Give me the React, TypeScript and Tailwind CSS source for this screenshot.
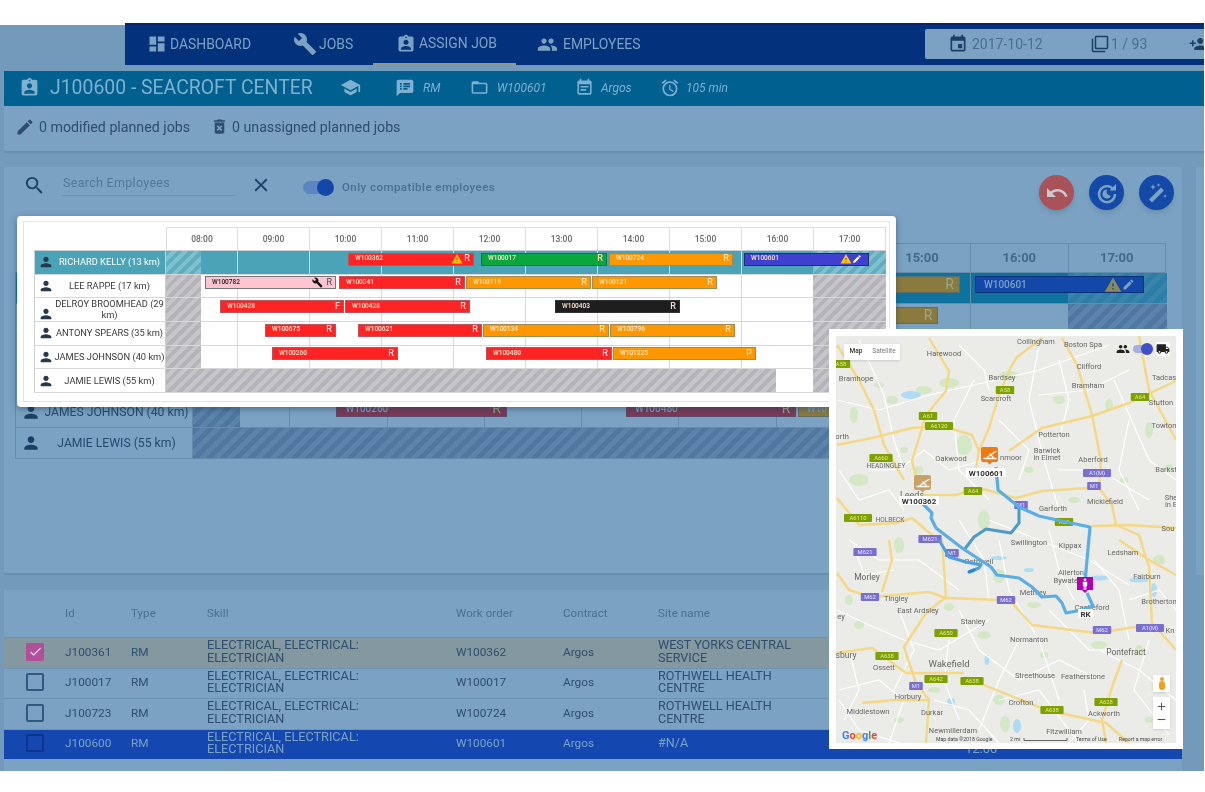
import React from "react";
import {
  MdDashboard, MdBuild, MdAssignmentInd, MdPeople, MdEvent, MdFilterNone, MdPersonAdd, MdSchool,
  MdSpeakerNotes, MdFolderOpen, MdEventNote, MdAccessAlarm, MdEdit, MdDeleteForever, MdSearch, MdClose,
  MdUndo, MdPerson, MdWarning, MdCheck, MdLocalShipping, MdAdd, MdRemove,
} from "react-icons/md";

type Bar = { id: string; l: number; r: number; c: "red" | "orange" | "green" | "blue" | "pink" | "black"; end: string; warn?: boolean; edit?: boolean; tool?: boolean };
type Row = { name: string; bars: Bar[]; hatch: [number, number][] };

const stdHatch: [number, number][] = [[0, 35], [647, 720]];
const rows: Row[] = [
  { name: "RICHARD KELLY (13 km)", hatch: stdHatch, bars: [
    { id: "W100362", l: 182, r: 308, c: "red", end: "R", warn: true },
    { id: "W100017", l: 315, r: 441, c: "green", end: "R" },
    { id: "W100724", l: 443, r: 567, c: "orange", end: "R" },
    { id: "W100601", l: 578, r: 703, c: "blue", end: "", warn: true, edit: true },
  ] },
  { name: "LEE RAPPE (17 km)", hatch: stdHatch, bars: [
    { id: "W100782", l: 39, r: 170, c: "pink", end: "R", tool: true },
    { id: "W100341", l: 173, r: 299, c: "red", end: "R" },
    { id: "W100119", l: 300, r: 425, c: "orange", end: "R" },
    { id: "W100121", l: 426, r: 551, c: "orange", end: "R" },
  ] },
  { name: "DELROY BROOMHEAD (29\nkm)", hatch: stdHatch, bars: [
    { id: "W100428", l: 54, r: 178, c: "red", end: "F" },
    { id: "W100428", l: 179, r: 304, c: "red", end: "R" },
    { id: "W100403", l: 389, r: 514, c: "black", end: "R" },
  ] },
  { name: "ANTONY SPEARS (35 km)", hatch: stdHatch, bars: [
    { id: "W100675", l: 99, r: 170, c: "red", end: "R" },
    { id: "W100621", l: 192, r: 316, c: "red", end: "R" },
    { id: "W100134", l: 317, r: 443, c: "orange", end: "R" },
    { id: "W100796", l: 444, r: 569, c: "orange", end: "R" },
  ] },
  { name: "JAMES JOHNSON (40 km)", hatch: stdHatch, bars: [
    { id: "W100260", l: 106, r: 232, c: "red", end: "R" },
    { id: "W100480", l: 320, r: 446, c: "red", end: "R" },
    { id: "W101225", l: 447, r: 590, c: "orange", end: "P" },
  ] },
  { name: "JAMIE LEWIS (55 km)", hatch: [[0, 610], [647, 720]], bars: [] },
];
const hours = ["08:00", "09:00", "10:00", "11:00", "12:00", "13:00", "14:00", "15:00", "16:00", "17:00"];

const frontBar = {
  red: "bg-[#ff2323] border-[#b9555d]",
  orange: "bg-[#ff9800] border-[#a38a55]",
  green: "bg-[#0aa63e] border-[#1b6d62]",
  blue: "bg-[#3f3fd0] border-[#22305f]",
  pink: "bg-[#ffc4d0] border-[#77777f]",
  black: "bg-[#1e1e1e] border-[#333333]",
};
const backBar = {
  red: "bg-[#7a3a55] border-[#5c4a70]",
  orange: "bg-[#8b7a3e] border-[#5f6f68]",
  green: "bg-[#3a7a6a] border-[#2a5f70]",
  blue: "bg-[#1448a8] border-[#0b2f78]",
  pink: "bg-[#a38aa8] border-[#4f6a85]",
  black: "bg-[#2a3f55] border-[#223a55]",
};

function Schedule({ front }: { front: boolean }) {
  const scale = front ? 1 : 97.4 / 72;
  const barClass = front ? frontBar : backBar;
  const colW = 72 * scale;
  return (
    <div className={front ? "w-[852px]" : "w-[1151px]"}>
      <div className={`flex ${front ? "h-[23px] pl-[132px]" : "h-[29px] pl-[177px]"}`}>
        {hours.map((h) => (
          <div key={h} style={{ width: colW }} className={`flex items-center justify-center border-t border-r first:border-l ${front ? "border-[#dddddd] text-[8.5px] font-medium text-[#666666]" : "border-[#668cab] text-[13px] font-bold text-[#44698a]"}`}>{h}</div>
        ))}
      </div>
      <div className={`border-t border-l ${front ? "border-[#c9cfd2]" : "border-[#668cab]"}`}>
        {rows.map((row, i) => (
          <div key={row.name} className={`flex border-b ${front ? "h-[23.7px] border-[#d8d8d8]" : "h-[31px] border-[#668cab]"} ${i === 0 ? (front ? "bg-[#4ba3b8]" : "bg-[#0e729e]") : ""}`}>
            <div className={`flex shrink-0 items-center border-r ${front ? "w-[131px] border-[#c9cfd2] pl-[3px]" : "w-[177px] border-[#668cab] pl-[5px]"}`}>
              <MdPerson className={`shrink-0 ${front ? `text-[16px] text-[#26384a] ${i === 2 ? "mt-[8px]" : ""}` : "text-[20px] text-[#1d3f66]"}`} />
              <span className={`min-w-0 flex-1 overflow-hidden text-center ${front ? `whitespace-pre text-[9.3px] leading-[10.5px] ${i === 0 ? "text-white" : "text-[#3a3a3a]"}` : "text-[12.2px] whitespace-nowrap text-[#26496f]"}`}>{front ? row.name : row.name.replace("\n", " ")}</span>
            </div>
            <div className="relative flex-1">
              <div className="absolute inset-0 flex">
                {hours.map((h) => (
                  <div key={h} style={{ width: colW }} className={`border-r ${front ? "border-[#d8d8d8]" : "border-[#668cab]"}`} />
                ))}
              </div>
              {row.hatch.map(([a, b]) => (
                <div key={a} style={{ left: a * scale, width: (b - a) * scale }} className={`absolute inset-y-0 ${front
                  ? i === 0
                    ? "bg-[repeating-linear-gradient(135deg,#5eaec0_0,#5eaec0_4px,#80bfcd_4px,#80bfcd_8px)]"
                    : "bg-[repeating-linear-gradient(135deg,#b4b4ba_0,#b4b4ba_4px,#c6c6ca_4px,#c6c6ca_8px)]"
                  : i === 0
                    ? "bg-[repeating-linear-gradient(135deg,#2a7ea8_0,#2a7ea8_5px,#3a84ab_5px,#3a84ab_10px)]"
                    : "bg-[repeating-linear-gradient(135deg,#4f78a0_0,#4f78a0_5px,#5d83aa_5px,#5d83aa_10px)]"}`} />
              ))}
              {row.bars.map((b) => (
                <div key={b.id + b.l} style={{ left: b.l * scale, width: (b.r - b.l) * scale }} className={`absolute flex items-center border ${barClass[b.c]} ${front ? "top-[1.5px] h-[13px] px-[6px] text-[6.5px] font-medium" : "top-[3px] h-[17px] px-[8px] text-[10px] font-medium"} ${b.c === "pink" ? "font-bold text-[#222222]" : front ? "text-[#ffe9d0]" : "text-[#7ba2c2]"}`}>
                  <span className="flex-1">{b.id}</span>
                  {b.tool && <MdBuild className="mr-[2px] text-[11px] text-[#111111]" />}
                  {b.warn && <MdWarning className={front ? "text-[12px] text-[#ffc107]" : "text-[18px] text-[#8a8a52]"} />}
                  {b.edit && <MdEdit className={front ? "text-[10px] text-white" : "text-[13px] text-[#7ba2c2]"} />}
                  {b.end && <span className={`-mr-[3px] ${!front ? "text-[14px] font-normal text-[#9aa88a]" : `ml-[1px] text-[9px] ${b.c === "pink" ? "font-normal text-[#444444]" : b.c === "red" || b.c === "black" ? "text-[#ffd6d6]" : "text-[#ffe2a8]"}`}`}>{b.end}</span>}
                </div>
              ))}
            </div>
          </div>
        ))}
      </div>
    </div>
  );
}

const yellow = [
  "M1063 338L1078 365L1093 415L1102 461L1100 488L1113 505L1117 525L1140 535L1150 567L1153 623L1177 650",
  "M1010 451L1043 428L1093 416L1130 403L1177 381",
  "M1043 338L1017 358L1010 371L1000 395L990 428L980 451L977 468",
  "M930 338L950 371L947 391L927 415L920 438L913 461L920 488",
  "M838 445L873 438L913 428L943 426L973 435L980 451",
  "M838 345L860 380L875 410L885 445L905 480",
  "M925 495L957 495L980 488L1017 498L1043 491L1090 488",
  "M913 518L933 535L943 540L947 597L927 613L905 647L917 683L930 700L927 743",
  "M838 573L850 590L873 597L930 592L947 598L1000 600L1013 603L1033 625L1097 633L1150 625",
  "M890 540L893 560L883 592",
  "M965 677L1047 710L1107 723L1130 743",
  "M838 653L873 648L907 673L965 673",
  "M1123 660L1113 687L1103 720L1107 743",
  "M838 498L860 525L897 523L913 518",
  "M1177 528L1130 525L1093 526",
  "M863 703L897 700L930 700",
  "M1140 336L1150 390L1177 440",
  "M1120 540L1150 560L1177 575",
];
const white = [
  "M838 400L880 410L930 395L975 385L1040 370L1110 345", "M860 340L885 395L895 440L905 470",
  "M975 380L955 420L960 470L990 500", "M1040 345L1030 400L1045 460L1060 510", "M1115 380L1150 460L1177 480",
  "M990 520L1040 540L1090 560L1130 585", "M850 540L880 560L920 560L960 590", "M1000 540L1010 590L1040 640L1060 700",
  "M960 610L980 650L1020 680L1060 660L1100 680", "M838 610L870 625L905 640L940 650L990 620", "M840 690L880 680L905 700L890 743",
  "M935 700L970 710L1000 743", "M1000 700L1040 690L1070 730L1080 743", "M1100 650L1140 670L1177 700",
  "M1130 600L1160 590L1177 610", "M1050 610L1090 650L1120 650", "M870 470L900 470L925 450L950 470L985 460",
  "M1060 470L1100 470L1150 500", "M1040 395L1090 390L1130 370", "M840 700L860 730L900 743",
  "M840 470L860 500L890 490L905 510", "M855 545L865 575L895 570", "M900 610L915 650L895 690", "M960 520L985 560L990 600",
  "M1050 530L1060 570L1075 600", "M1095 560L1120 590L1130 640", "M1150 640L1135 690L1170 735", "M1020 640L1000 680L980 730",
  "M950 640L945 680L960 720", "M1060 360L1070 400L1060 440", "M1130 420L1120 470L1140 510", "M960 345L985 370L990 390",
  "M1000 420L1030 450L1020 480", "M850 650L860 690L845 720", "M1085 690L1090 720L1070 743",
];
const greens: [number, number, number, number][] = [
  [950, 383, 10, 5], [965, 445, 8, 10], [925, 390, 8, 4], [1060, 400, 6, 4], [1150, 430, 4, 8], [860, 480, 10, 6],
  [1010, 375, 10, 4], [985, 520, 6, 10], [1110, 405, 4, 6], [920, 470, 4, 4], [893, 400, 6, 4], [855, 415, 4, 8],
  [1000, 576, 6, 7], [1035, 605, 7, 3], [900, 545, 5, 8], [850, 600, 4, 5], [1100, 645, 8, 4], [950, 607, 5, 4],
  [985, 635, 7, 4], [1000, 700, 6, 5], [1006, 724, 5, 8], [860, 625, 5, 4], [1160, 560, 6, 5], [1170, 468, 4, 4],
  [1140, 650, 4, 5], [935, 690, 6, 3], [1075, 500, 6, 3], [880, 385, 5, 3], [905, 450, 4, 3], [1030, 470, 5, 3],
  [1125, 480, 4, 3], [1045, 655, 4, 3], [900, 720, 5, 3], [1150, 720, 4, 3],
];
const waters: [number, number, number, number][] = [
  [912, 395, 10, 4], [1100, 578, 10, 2.500], [1140, 580, 10, 2.500], [1000, 558, 8, 2], [952, 702, 4, 4], [1018, 726, 4, 7], [1155, 590, 3, 7], [988, 660, 2.500, 5], [1030, 570, 5, 2],
];
const labels: [string, number, number, number?][] = [
  ["Collingham", 1037, 344], ["Boston Spa", 1084, 347], ["Harewood", 945, 356], ["Bardsey", 1003, 380], ["Clifford", 1090, 369], ["Bramhope", 857, 381],
  ["Bramham", 1089, 388], ["Tadcas", 1165, 380], ["Scarcroft", 997, 401], ["Stutton", 1162, 405], ["Towton", 1165, 428], ["orth", 843, 439],
  ["Potterton", 1055, 437], ["Barwick", 1048, 453], ["in Elmet", 1048, 460], ["Oakwood", 952, 461], ["nmoor", 1012, 460], ["Aberford", 1094, 462],
  ["HEADINGLEY", 887, 468, 6.500], ["Barkst", 1167, 472], ["Leeds", 913, 498, 9], ["Micklefield", 1106, 504], ["Garforth", 1054, 511], ["HOLBECK", 891, 522, 6.500], ["She", 1172, 500], ["in E", 1172, 507],
  ["Sou", 1169, 531], ["Swillington", 1030, 545], ["Kippax", 1071, 548], ["Ledsham", 1124, 555], ["Morley", 868, 580, 8.500], ["Rothwell", 980, 564], ["Allerton", 1072, 575],
  ["Bywater", 1068, 583], ["Fairburn", 1148, 579], ["Methley", 1034, 595], ["Tingley", 897, 601], ["Castleford", 1093, 610], ["Brotherton", 1160, 604],
  ["East Ardsley", 919, 613], ["ey", 842, 619], ["Stanley", 974, 624], ["Normanton", 1030, 642], ["Kn", 1171, 633], ["Pontefract", 1127, 655, 8.500],
  ["sbury", 847, 658, 8.500], ["Ossett", 885, 670], ["Wakefield", 950, 667, 9.500], ["Streethouse", 1036, 678], ["Featherstone", 1084, 679], ["Horbury", 909, 699],
  ["Crofton", 1022, 705], ["Ackworth", 1105, 716], ["Middlestown", 869, 714], ["Durkar", 933, 715], ["Newmillerdam", 954, 733], ["Fitzwilliam", 1065, 734],
];
const badges: [string, number, number, boolean][] = [
  ["A58", 1006, 390, false], ["A61", 929, 416, false], ["A6120", 940, 426, false], ["A660", 882, 458, false], ["A64", 1141, 397, false], ["A64", 974, 491, false],
  ["A6110", 859, 518, false], ["A58", 842, 364, false], ["M1", 1095, 486, true], ["A1(M)", 1098, 473, true], ["M1", 1022, 505, true], ["A63", 1065, 522, false],
  ["M621", 931, 539, true], ["M621", 866, 552, true], ["M1", 953, 553, true], ["M62", 871, 597, true], ["M62", 1007, 600, true], ["M62", 1103, 630, true],
  ["A1(M)", 1151, 628, true], ["A650", 947, 633, false], ["A638", 888, 656, false], ["A642", 937, 679, false], ["A638", 973, 681, false], ["A628", 1107, 702, false],
  ["A638", 1053, 710, false], ["M1", 917, 686, true],
];

function Pin({ x, y, fill }: { x: number; y: number; fill: string }) {
  return (
    <g>
      <path d={`M${x} ${y}h13a2 2 0 0 1 2 2v11a2 2 0 0 1-2 2h-4l-2.500 2.500l-2.500-2.500h-4a2 2 0 0 1-2-2v-11a2 2 0 0 1 2-2z`} transform="translate(1 0)" fill={fill} />
      <path d={`M${x + 2} ${y + 11.500}h12M${x + 5} ${y + 10.500}l7-5l2 -1M${x + 8} ${y + 7}l3 3`} stroke="#ffffff" strokeWidth="1.300" fill="none" strokeLinecap="round" />
    </g>
  );
}

function MapTag({ text, x, y, w }: { text: string; x: number; y: number; w: number }) {
  return (
    <g>
      <rect x={x - w / 2} y={y - 4.500} width={w} height={9} fill="#ffffff" />
      <text x={x} y={y + 3} textAnchor="middle" fontSize="8" fontWeight="700" fill="#333333">{text}</text>
    </g>
  );
}

function MapView() {
  return (
    <div className="absolute top-[329px] left-[829px] h-[420px] w-[354px] bg-white p-[7px]">
      <div className="relative h-[407px] w-[340px] overflow-hidden bg-[#ebebe8]">
        <svg viewBox="837 336 340 407" className="absolute inset-0 h-full w-full">
          {greens.map(([x, y, a, b]) => <ellipse key={`${x}-${y}`} cx={x} cy={y} rx={a} ry={b} fill="#d3e8c4" />)}
          {waters.map(([x, y, a, b]) => <ellipse key={`${x}-${y}`} cx={x} cy={y} rx={a} ry={b} fill="#aedcf5" />)}
          {white.map((d) => <path key={d} d={d} fill="none" stroke="#ffffff" strokeWidth="1.200" />)}
          {yellow.map((d) => <path key={d} d={d} fill="none" stroke="#f5d884" strokeWidth="2.400" strokeLinejoin="round" />)}
          {labels.map(([t, x, y, s]) => <text key={t + x} x={x} y={y} textAnchor="middle" fontSize={s ?? 7.500} fill="#666666">{t}</text>)}
          {badges.map(([t, x, y, m]) => (
            <g key={t + x + y}>
              <rect x={x - (t.length * 2.400 + 2)} y={y - 4} width={t.length * 4.800 + 4} height={8} rx="1" fill={m ? "#7a6fd0" : "#7da200"} />
              <text x={x} y={y + 2.300} textAnchor="middle" fontSize="5.800" fill={m ? "#e8e8ff" : "#e8e89a"}>{t}</text>
            </g>
          ))}
          <path d="M1020 507L1020 523L1012 533L987 529L975 537L965 550" fill="none" stroke="#4c9ac9" strokeWidth="3" strokeLinejoin="round" />
          <path d="M997 467L999 490L1020 507L1040 516L1067 522L1091 527L1086 582" fill="none" stroke="#5aaee8" strokeWidth="3.200" strokeLinejoin="round" />
          <path d="M1088 593L1094 606L1083 610L1067 613L1063 603L1057 596L1043 597L1033 587L1020 578L998 575L992 567L963 548L937 528L932 518L933 513L923 503" fill="none" stroke="#5aaee8" strokeWidth="3.200" strokeLinejoin="round" />
          <path d="M940 540L950 557L967 562L982 565L980 568L970 572" fill="none" stroke="#4aa0e6" strokeWidth="3" strokeLinejoin="round" />
          <path d="M975 570L970 572" fill="none" stroke="#1e88e5" strokeWidth="3" strokeLinecap="round" />
          <Pin x={983} y={447} fill="#f07a10" />
          <MapTag text="W100601" x={987} y={472.500} w={40} />
          <Pin x={916} y={475} fill="#c9a268" />
          <MapTag text="W100362" x={920} y={500.500} w={40} />
          <path d="M1078 577h16v13h-5l-3 3l-3-3h-5z" fill="#b000b0" />
          <circle cx="1086" cy="579.800" r="1.400" fill="#ffffff" />
          <path d="M1083.800 581.800h4.400v4h-.8v4.200h-1v-3.200h-.8v3.200h-1v-4.200h-.8z" fill="#ffffff" />
          <MapTag text="RK" x={1086.500} y={613.500} w={15} />
          <text x="843" y="739" fontSize="11" fontWeight="700"><tspan fill="#4285f4">G</tspan><tspan fill="#ea4335">o</tspan><tspan fill="#fbbc05">o</tspan><tspan fill="#4285f4">g</tspan><tspan fill="#34a853">l</tspan><tspan fill="#ea4335">e</tspan></text>
          <text x="937" y="741" fontSize="5.200" fill="#444444">Map data ©2018 Google</text>
          <text x="1011" y="741" fontSize="5.200" fill="#444444">2 mi</text>
          <path d="M1025 738v2.500h43v-2.500" fill="none" stroke="#666666" strokeWidth="1" />
          <text x="1077" y="741" fontSize="5.200" fill="#444444">Terms of Use</text>
          <text x="1120" y="741" fontSize="5.200" fill="#444444">Report a map error</text>
        </svg>
        <div className="absolute top-[8px] left-[8px] flex h-[16px] w-[56px] items-center bg-white text-[6.5px] shadow-sm">
          <span className="w-[24px] text-center font-medium text-[#333333]">Map</span>
          <span className="flex-1 text-center text-[#777777]">Satellite</span>
        </div>
        <div className="absolute top-[6px] right-[6px] flex items-center">
          <MdPeople className="text-[14px] text-[#222222]" />
          <span className="relative mx-[3px] h-[8px] w-[20px] rounded-full bg-[#a9aee0]">
            <span className="absolute top-[-2px] right-0 h-[12px] w-[12px] rounded-full bg-[#3f4fc8]" />
          </span>
          <span className="bg-white"><MdLocalShipping className="text-[14px] text-[#222222]" /></span>
        </div>
        <div className="absolute right-[6px] bottom-[51px] flex h-[17px] w-[17px] flex-col items-center justify-center bg-white shadow-sm">
          <span className="h-[4px] w-[4px] rounded-full bg-[#f0a020]" />
          <span className="h-[9px] w-[6px] rounded-full bg-[#f0a020]" />
        </div>
        <div className="absolute right-[6px] bottom-[14px] flex h-[32px] w-[17px] flex-col items-center justify-center bg-white text-[13px] text-[#555555] shadow-sm">
          <MdAdd />
          <MdRemove />
        </div>
      </div>
    </div>
  );
}

function RestoreIcon() {
  return (
    <svg viewBox="0 0 24 24" className="h-[24px] w-[24px] text-[#7ba2c2]" fill="none">
      <path d="M18.500 8.500A8 8 0 1 0 20 13" stroke="currentColor" strokeWidth="2.400" />
      <path d="M14.500 9.500H21V3z" fill="currentColor" />
      <path d="M12 8.500a4.500 4.500 0 1 0 4 6.500a4.500 4.500 0 0 1-4-6.500z" fill="currentColor" />
    </svg>
  );
}

function WandIcon() {
  return (
    <svg viewBox="0 0 24 24" className="h-[24px] w-[24px] text-[#7ba2c2]" fill="currentColor">
      <path d="M16 6.500l3 3L7 21.500l-3-3z" />
      <path d="M8 3l.8 2.200L11 6l-2.200.8L8 9l-.8-2.200L5 6l2.200-.8zM13.500 2l.6 1.400 1.400.6-1.400.6-.6 1.400-.6-1.400-1.400-.6 1.400-.6zM20 13l.6 1.400 1.400.6-1.400.6-.6 1.400-.6-1.400-1.400-.6 1.400-.6z" />
    </svg>
  );
}

const jobs = [
  { chk: "pink", id: "J100361", wo: "W100362", site: "WEST YORKS CENTRAL SERVICE", bg: "bg-[#84989f]" },
  { chk: "", id: "J100017", wo: "W100017", site: "ROTHWELL HEALTH CENTRE", bg: "" },
  { chk: "", id: "J100723", wo: "W100724", site: "ROTHWELL HEALTH CENTRE", bg: "" },
  { chk: "blue", id: "J100600", wo: "W100601", site: "#N/A", bg: "bg-[#1448b0] text-[#7ba2c2]" },
];
const cols = "grid grid-cols-[61px_66px_76px_249px_107px_95px_307px_1fr] items-center";

export default function App() {
  return (
    <div className="relative h-[792px] w-[1205px] overflow-hidden bg-white font-['Roboto',sans-serif] blur-[0.4px]">
      <div className="h-[23px]" />
      <div className="h-[748px] w-[1204px] bg-[linear-gradient(to_bottom,#ffffff_0,#ffffff_2px,#7399bb_2px)]">
        <nav className="ml-[125px] flex h-[42px] items-center border-t-2 border-[#0b2270] bg-[#04317c] text-[13.9px] text-[#7ba2c2]">
          <a className="mb-[2px] ml-[22px] flex w-[146px] items-center gap-[3px]"><MdDashboard className="text-[20px]" />DASHBOARD</a>
          <a className="mb-[2px] flex w-[80px] items-center gap-[2px]"><MdBuild className="text-[24px]" />JOBS</a>
          <a className="flex h-full w-[143px] items-center gap-[3px] border-b-2 border-[#8f9a8f] pb-[1px] pl-[23px]"><MdAssignmentInd className="text-[20px]" />ASSIGN JOB</a>
          <a className="mb-[2px] ml-[21px] flex items-center gap-[5px]"><MdPeople className="text-[21px]" />EMPLOYEES</a>
          <div className="mt-[2px] mb-[4px] ml-auto flex h-[30px] w-[279px] items-center overflow-hidden rounded-l-[2px] bg-[#7ba2c2] text-[14px] text-[#4c6d90]">
            <MdEvent className="ml-[23px] shrink-0 text-[20px] text-[#1d3f66]" />
            <span className="ml-[4px] w-[119px] shrink-0">2017-10-12</span>
            <MdFilterNone className="shrink-0 text-[18px] text-[#1d3f66]" />
            <span className="ml-[2px] w-[78px] shrink-0">1 / 93</span>
            <MdPersonAdd className="shrink-0 text-[18px] text-[#1d3f66]" />
          </div>
        </nav>
        <header className="mt-[6px] ml-[4px] flex h-[35px] items-center bg-[#00608f] pb-[2px] text-[#7fb0cf]">
          <MdAssignmentInd className="ml-[15px] text-[21px]" />
          <h1 className="ml-[10px] w-[263px] text-[19.4px] whitespace-nowrap">J100600 - SEACROFT CENTER</h1>
          <MdSchool className="ml-[27px] text-[21px]" />
          <MdSpeakerNotes className="ml-[34px] text-[20px]" />
          <i className="ml-[8px] w-[19px] text-[12px]">RM</i>
          <MdFolderOpen className="ml-[28px] text-[19px]" />
          <i className="ml-[8px] w-[50px] text-[12px]">W100601</i>
          <MdEventNote className="ml-[28px] text-[19px]" />
          <i className="ml-[7px] w-[31px] text-[12px]">Argos</i>
          <MdAccessAlarm className="ml-[28px] text-[20px]" />
          <i className="ml-[6px] text-[12px]">105 min</i>
        </header>
        <div className="ml-[4px] flex h-[47px] items-start border-b-2 border-[#6a8fae] bg-[#7ba2c2] pt-[11px] text-[14.2px] text-[#2f4d70]">
          <MdEdit className="ml-[11px] text-[20px]" />
          <span className="ml-[4px] w-[151px]">0 modified planned jobs</span>
          <MdDeleteForever className="ml-[20px] text-[19px]" />
          <span className="ml-[3px]">0 unassigned planned jobs</span>
        </div>
        <div className="mt-[14px] flex">
          <section className="ml-[4px] h-[408px] w-[1178px] border-b-2 border-[#6a8fae] bg-[#7ba2c2]">
            <div className="flex h-[52px] items-center pr-[8px] pl-[19px]">
              <MdSearch className="mb-[16px] text-[23px] text-[#1d3f66]" />
              <div className="mb-[16px] ml-[16px] h-[22px] w-[174px] border-b border-[#6c93b4] pl-[1px] text-[12.5px] leading-[18px] tracking-[0.3px] text-[#54779a]">Search Employees</div>
              <MdClose className="mb-[16px] ml-[14px] text-[22px] text-[#1d3f66]" />
              <div className="relative mb-[12px] ml-[31px] h-[13px] w-[27px] rounded-full bg-[#5b86c0]">
                <span className="absolute top-[-2px] -right-[4px] h-[17px] w-[17px] rounded-full bg-[#1448a8]" />
              </div>
              <span className="mb-[11px] ml-[12px] text-[11.5px] font-medium tracking-[0.45px] text-[#4b6f8e]">Only compatible employees</span>
              <div className="mb-[1px] ml-auto flex items-center gap-[15px]">
                <button className="flex h-[35px] w-[35px] items-center justify-center rounded-full bg-[#a8535a] text-[24px] text-[#c8c8d0] shadow-md"><MdUndo /></button>
                <button className="flex h-[35px] w-[35px] items-center justify-center rounded-full bg-[#134aa8] shadow-md"><RestoreIcon /></button>
                <button className="flex h-[35px] w-[35px] items-center justify-center rounded-full bg-[#134aa8] shadow-md"><WandIcon /></button>
              </div>
            </div>
            <div className="mt-[24px] ml-[11px]"><Schedule front={false} /></div>
          </section>
          <div className="ml-[14px] h-[408px] w-[8px] bg-[#7ba2c2]" />
        </div>
        <section className="mt-[15px] ml-[4px] h-[181px] w-[1178px] bg-[#7ba2c2] text-[11.8px] text-[#2f4e70]">
          <div className={`${cols} h-[47px] text-[11.5px] tracking-[0.1px] text-[#4b6f8e]`}>
            <span />
            <span>Id</span><span>Type</span><span>Skill</span><span>Work order</span><span>Contract</span><span>Site name</span>
          </div>
          {jobs.map((j) => (
            <div key={j.id} className={`${cols} h-[30.5px] border-t border-[#6c93b4] pb-[2px] leading-[12.5px] ${j.bg}`}>
              <span className={`ml-[22px] flex h-[18px] w-[18px] items-center justify-center rounded-[2px] ${j.chk === "pink" ? "bg-[#b0509a] text-[#d8c8e0]" : j.chk === "blue" ? "border-2 border-[#0c3488]" : "border-2 border-[#2f5a80]"}`}>
                {j.chk === "pink" && <MdCheck className="text-[15px]" />}
              </span>
              <span>{j.id}</span>
              <span>RM</span>
              <span className="w-[190px] text-[12.7px]">ELECTRICAL, ELECTRICAL: ELECTRICIAN</span>
              <span>{j.wo}</span>
              <span>Argos</span>
              <span className="w-[145px] text-[12.6px]">{j.site}</span>
              <span className="pt-[12px] text-[13px]">{j.chk === "blue" ? "12:00" : ""}</span>
            </div>
          ))}
        </section>
      </div>

      <div className="absolute top-[216px] left-[17px] h-[191px] w-[879px] rounded-[4px] bg-white p-[5px_6px_5px_6px] shadow-[0_2px_6px_rgba(30,60,90,0.5)]">
        <div className="h-[181px] w-[867px] border border-[#e4e4e4] pt-[5px] pl-[10px]">
          <Schedule front />
        </div>
      </div>
      <MapView />
    </div>
  );
}
